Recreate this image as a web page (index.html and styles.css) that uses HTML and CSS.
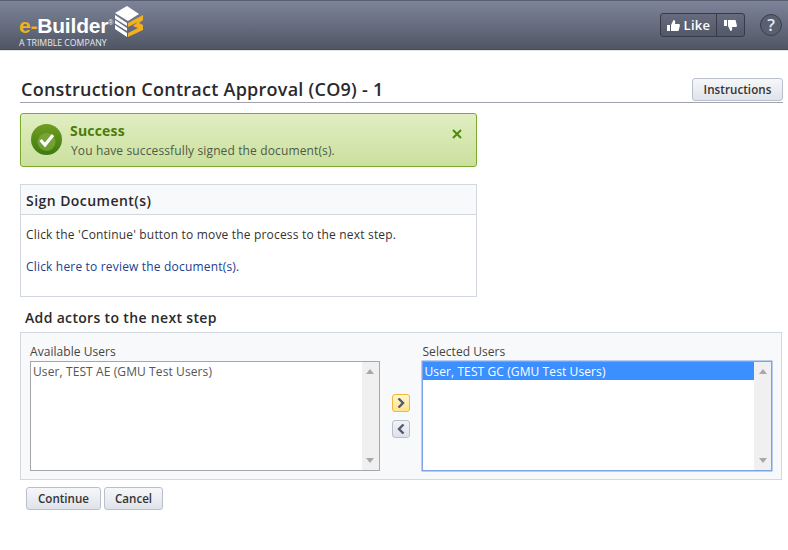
FILE: index.html
```html
<!DOCTYPE html>
<html lang="en">
<head>
<meta charset="utf-8">
<title>Construction Contract Approval</title>
<link rel="stylesheet" href="styles.css">
</head>
<body>
<header class="topbar">
  <div class="logo">
    <div class="logo-text">
      <div class="brand"><span class="brand-e">e-</span>Builder<span class="reg">®</span></div>
      <div class="tagline">A TRIMBLE COMPANY</div>
    </div>
    <svg class="logo-mark" width="30" height="32" viewBox="0 0 30 32">
      <path d="M1 7 L13 0 L25 8 L14 15Z" fill="#fff"/>
      <path d="M1 9 L13 17 L13 20 L1 12.500Z M1 14 L13 22 L13 25 L1 17.500Z M1 19 L13 27 L13 31 L1 23Z" fill="#fff"/>
      <path d="M14 17 L29 9 L29 14 L25 17 L29 19 L29 24 L14 31 L14 27 L24 22 L19 20 L24 16 L14 21Z" fill="#f2b01e"/>
    </svg>
  </div>
  <div class="top-actions">
    <div class="like-group">
      <button class="like-btn" type="button">
        <svg width="13" height="13" viewBox="0 0 13 13"><path d="M0 6h3v6H0z M4 6 L6.500 1 C8 1 8.500 2.500 8 5 H12 C13 5 13 6 12.800 7 L11.500 12 H4Z" fill="#fff"/></svg>
        <span>Like</span>
      </button>
      <button class="dislike-btn" type="button">
        <svg width="13" height="13" viewBox="0 0 13 13"><path d="M0 1h3v6H0z M4 1 H11.500 L12.800 6 C13 7 13 8 12 8 H8 C8.500 10.500 8 12 6.500 12 L4 7Z" fill="#fff"/></svg>
      </button>
    </div>
    <button class="help-btn" type="button">?</button>
  </div>
</header>

<main class="page">
  <div class="title-row">
    <h1 class="title">Construction Contract Approval (CO9) - 1</h1>
    <button class="btn btn-instructions" type="button">Instructions</button>
  </div>

  <div class="alert">
    <svg class="alert-icon" width="31" height="31" viewBox="0 0 31 31">
      <defs><linearGradient id="okgrad" x1="0" y1="0" x2="0" y2="1"><stop offset="0" stop-color="#6f9d22"/><stop offset="1" stop-color="#3f7a10"/></linearGradient></defs>
      <circle cx="15.500" cy="15.500" r="15.500" fill="url(#okgrad)"/>
      <circle cx="15.500" cy="18" r="9" fill="#8fb74d" opacity=".55"/>
      <path d="M9.500 16 L14 21 L22 11" fill="none" stroke="#fff" stroke-width="3.200"/>
    </svg>
    <div class="alert-body">
      <div class="alert-title">Success</div>
      <div class="alert-text">You have successfully signed the document(s).</div>
    </div>
    <svg class="alert-close" width="10" height="10" viewBox="0 0 10 10"><path d="M1 1 L9 9 M9 1 L1 9" stroke="#4f8a10" stroke-width="2"/></svg>
  </div>

  <section class="sign-panel">
    <h2 class="sign-head">Sign Document(s)</h2>
    <div class="sign-body">
      <p class="sign-p">Click the 'Continue' button to move the process to the next step.</p>
      <p class="sign-p"><a class="link" href="#">Click here to review the document(s)</a>.</p>
    </div>
  </section>

  <h2 class="actors-head">Add actors to the next step</h2>
  <section class="actors">
    <div class="col col-left">
      <div class="col-label">Available Users</div>
      <div class="listbox">
        <div class="list-items"><div class="item">User, TEST AE (GMU Test Users)</div></div>
        <div class="scroll"><span class="arrow-up"></span><span class="arrow-down"></span></div>
      </div>
    </div>
    <div class="move">
      <button class="move-btn move-on" type="button"><svg width="8" height="10" viewBox="0 0 8 10"><path d="M1.500 0.500 L6 5 L1.500 9.500" fill="none" stroke="#525a6e" stroke-width="2.400"/></svg></button>
      <button class="move-btn" type="button"><svg width="8" height="10" viewBox="0 0 8 10"><path d="M6.500 0.500 L2 5 L6.500 9.500" fill="none" stroke="#525a6e" stroke-width="2.400"/></svg></button>
    </div>
    <div class="col col-right">
      <div class="col-label">Selected Users</div>
      <div class="listbox focus">
        <div class="list-items"><div class="item selected">User, TEST GC (GMU Test Users)</div></div>
        <div class="scroll"><span class="arrow-up"></span><span class="arrow-down"></span></div>
      </div>
    </div>
  </section>

  <div class="footer-btns">
    <button class="btn btn-continue" type="button">Continue</button>
    <button class="btn btn-cancel" type="button">Cancel</button>
  </div>
</main>
</body>
</html>
```
FILE: styles.css
```css
* { box-sizing: border-box; }
html, body { margin: 0; padding: 0; }
body {
  background: #fff;
  color: #2b2b2b;
  font-family: "Open Sans", "Noto Sans", "Liberation Sans", sans-serif;
  font-size: 12px;
  width: 788px;
  height: 550px;
  overflow: hidden;
}
.topbar {
  height: 51px;
  background: linear-gradient(#7d8499, #4f5563);
  border-top: 1px solid #5a6070;
  border-bottom: 1px solid #e6e6e6;
  box-shadow: inset 0 -1px 0 #454a57;
  display: flex;
  justify-content: space-between;
  align-items: flex-start;
  padding: 0 6px 0 19px;
}
.logo { display: flex; align-items: flex-start; }
.logo-text { margin-top: 11px; width: 95px; }
.brand {
  font-family: "Liberation Sans", sans-serif;
  font-weight: 700;
  font-size: 21px;
  line-height: 21px;
  color: #fff;
  letter-spacing: -0.2px;
  white-space: nowrap;
}
.brand-e { color: #f2b01e; }
.reg { font-size: 7px; font-weight: 400; vertical-align: 8px; }
.tagline {
  font-family: "Open Sans", sans-serif;
  font-size: 8.700px;
  line-height: 10px;
  margin-top: 2px;
  color: #e8e9ec;
  white-space: nowrap;
}
.logo-mark { margin-top: 5px; }
.top-actions { display: flex; align-items: center; gap: 15px; margin-top: 12px; }
.like-group {
  display: flex;
  height: 24px;
  margin-left: 1px;
  border: 1px solid #363b47;
  border-radius: 3px;
  background: linear-gradient(#666c7e, #525868);
}
.like-btn, .dislike-btn {
  border: 0;
  background: none;
  color: #fff;
  display: flex;
  align-items: center;
  padding: 0;
  font: 600 13px "Open Sans", sans-serif;
}
.like-btn { width: 56px; justify-content: center; gap: 4px; border-right: 1px solid #363b47; letter-spacing: .3px; }
.dislike-btn { width: 27px; justify-content: center; }
.help-btn {
  width: 22px;
  height: 22px;
  padding: 0;
  border-radius: 50%;
  border: 1px solid #3a3f4b;
  background: #596071;
  color: #e6e8ee;
  font: 600 17px/20px "Open Sans", sans-serif;
}
.page { padding: 26px 5px 0 20px; }
.title-row {
  display: flex;
  justify-content: space-between;
  align-items: flex-end;
  border-bottom: 1px solid #9fa3ad;
  height: 26px;
  padding-bottom: 1px;
}
.title {
  margin: 0;
  font-size: 18px;
  line-height: 24px;
  font-weight: 600;
  color: #2a2a2e;
  letter-spacing: .25px;
  margin-left: 1px;
}
.btn {
  height: 23px;
  padding: 0;
  border: 1px solid #b9c0cc;
  border-radius: 3px;
  background: linear-gradient(#f6f7f9, #dfe3ea);
  color: #333;
  font: 600 11.600px/20px "Open Sans", sans-serif;
}
.btn-instructions { width: 91px; letter-spacing: .05px; }
.btn-continue { width: 75px; }
.btn-cancel { width: 59px; }
.alert {
  width: 457px;
  height: 54px;
  margin-top: 10px;
  border: 1px solid #7aab2c;
  border-radius: 3px;
  background: linear-gradient(#e0eec1, #cbe09f);
  display: flex;
  align-items: flex-start;
  padding: 10px 14px 0 10px;
}
.alert-icon { flex: none; }
.alert-body { flex: 1; margin-left: 8px; margin-top: -3px; }
.alert-title { font-size: 14px; line-height: 20px; font-weight: 700; color: #4c7d0a; letter-spacing: .2px; }
.alert-text { font-size: 12px; line-height: 19px; color: #4f5b45; margin-left: 1px; letter-spacing: .13px; }
.alert-close { margin-top: 5px; }
.sign-panel {
  width: 457px;
  height: 113px;
  margin-top: 17px;
  border: 1px solid #d3d7e0;
}
.sign-head {
  margin: 0;
  height: 30px;
  padding-left: 5px;
  font-size: 14px;
  line-height: 32px;
  font-weight: 600;
  letter-spacing: .45px;
  background: #f8f9fb;
  border-bottom: 1px solid #d3d7e0;
  color: #2a2a2e;
}
.sign-body { padding: 11px 5px 0; }
.sign-p { margin: 0 0 15px; line-height: 17px; color: #333; letter-spacing: .18px; }
.link { color: #23408f; text-decoration: none; }
.actors-head {
  margin: 11px 0 0 5px;
  font-size: 14px;
  line-height: 20px;
  font-weight: 600;
  letter-spacing: .33px;
  color: #2a2a2e;
}
.actors {
  width: 762px;
  height: 148px;
  margin-top: 4px;
  border: 1px solid #d3d7e0;
  background: #f8f9fb;
  display: flex;
  align-items: flex-start;
  padding: 10px 9px 0 9px;
}
.col-left { width: 350px; }
.col-right { width: 350px; }
.col-label { font-size: 12px; line-height: 18px; color: #444; letter-spacing: .05px; }
.listbox {
  height: 110px;
  display: flex;
  border: 1px solid #a6a6a6;
  background: #fff;
}
.listbox.focus { border-color: #7da2e6; box-shadow: 0 0 0 0.500px #7da2e6; }
.list-items { flex: 1; padding: 0 2px; }
.focus .list-items { padding: 0; }
.item { font-size: 12px; line-height: 17px; padding-top: 1px; color: #555; white-space: nowrap; letter-spacing: .1px; }
.item.selected { background: #3b8fff; color: #fff; padding-left: 1px; }
.scroll {
  width: 17px;
  background: #f0f0f0;
  display: flex;
  flex-direction: column;
  justify-content: space-between;
  align-items: center;
  padding: 7px 0;
}
.arrow-up { border: 4px solid transparent; border-top: 0; border-bottom: 5px solid #a8a8a8; }
.arrow-down { border: 4px solid transparent; border-bottom: 0; border-top: 5px solid #a8a8a8; }
.move {
  width: 43px;
  padding-top: 51px;
  display: flex;
  flex-direction: column;
  align-items: center;
  gap: 8px;
}
.move-btn {
  width: 18px;
  height: 18px;
  padding: 0;
  border: 1px solid #b9c0cc;
  border-radius: 3px;
  background: linear-gradient(#f2f3f6, #dde1e8);
  display: flex;
  align-items: center;
  justify-content: center;
}
.move-on {
  border-color: #eeb93a;
  background: linear-gradient(#fff6cf, #ffe48a);
}
.footer-btns { display: flex; gap: 3px; margin: 7px 0 0 6px; }
```
